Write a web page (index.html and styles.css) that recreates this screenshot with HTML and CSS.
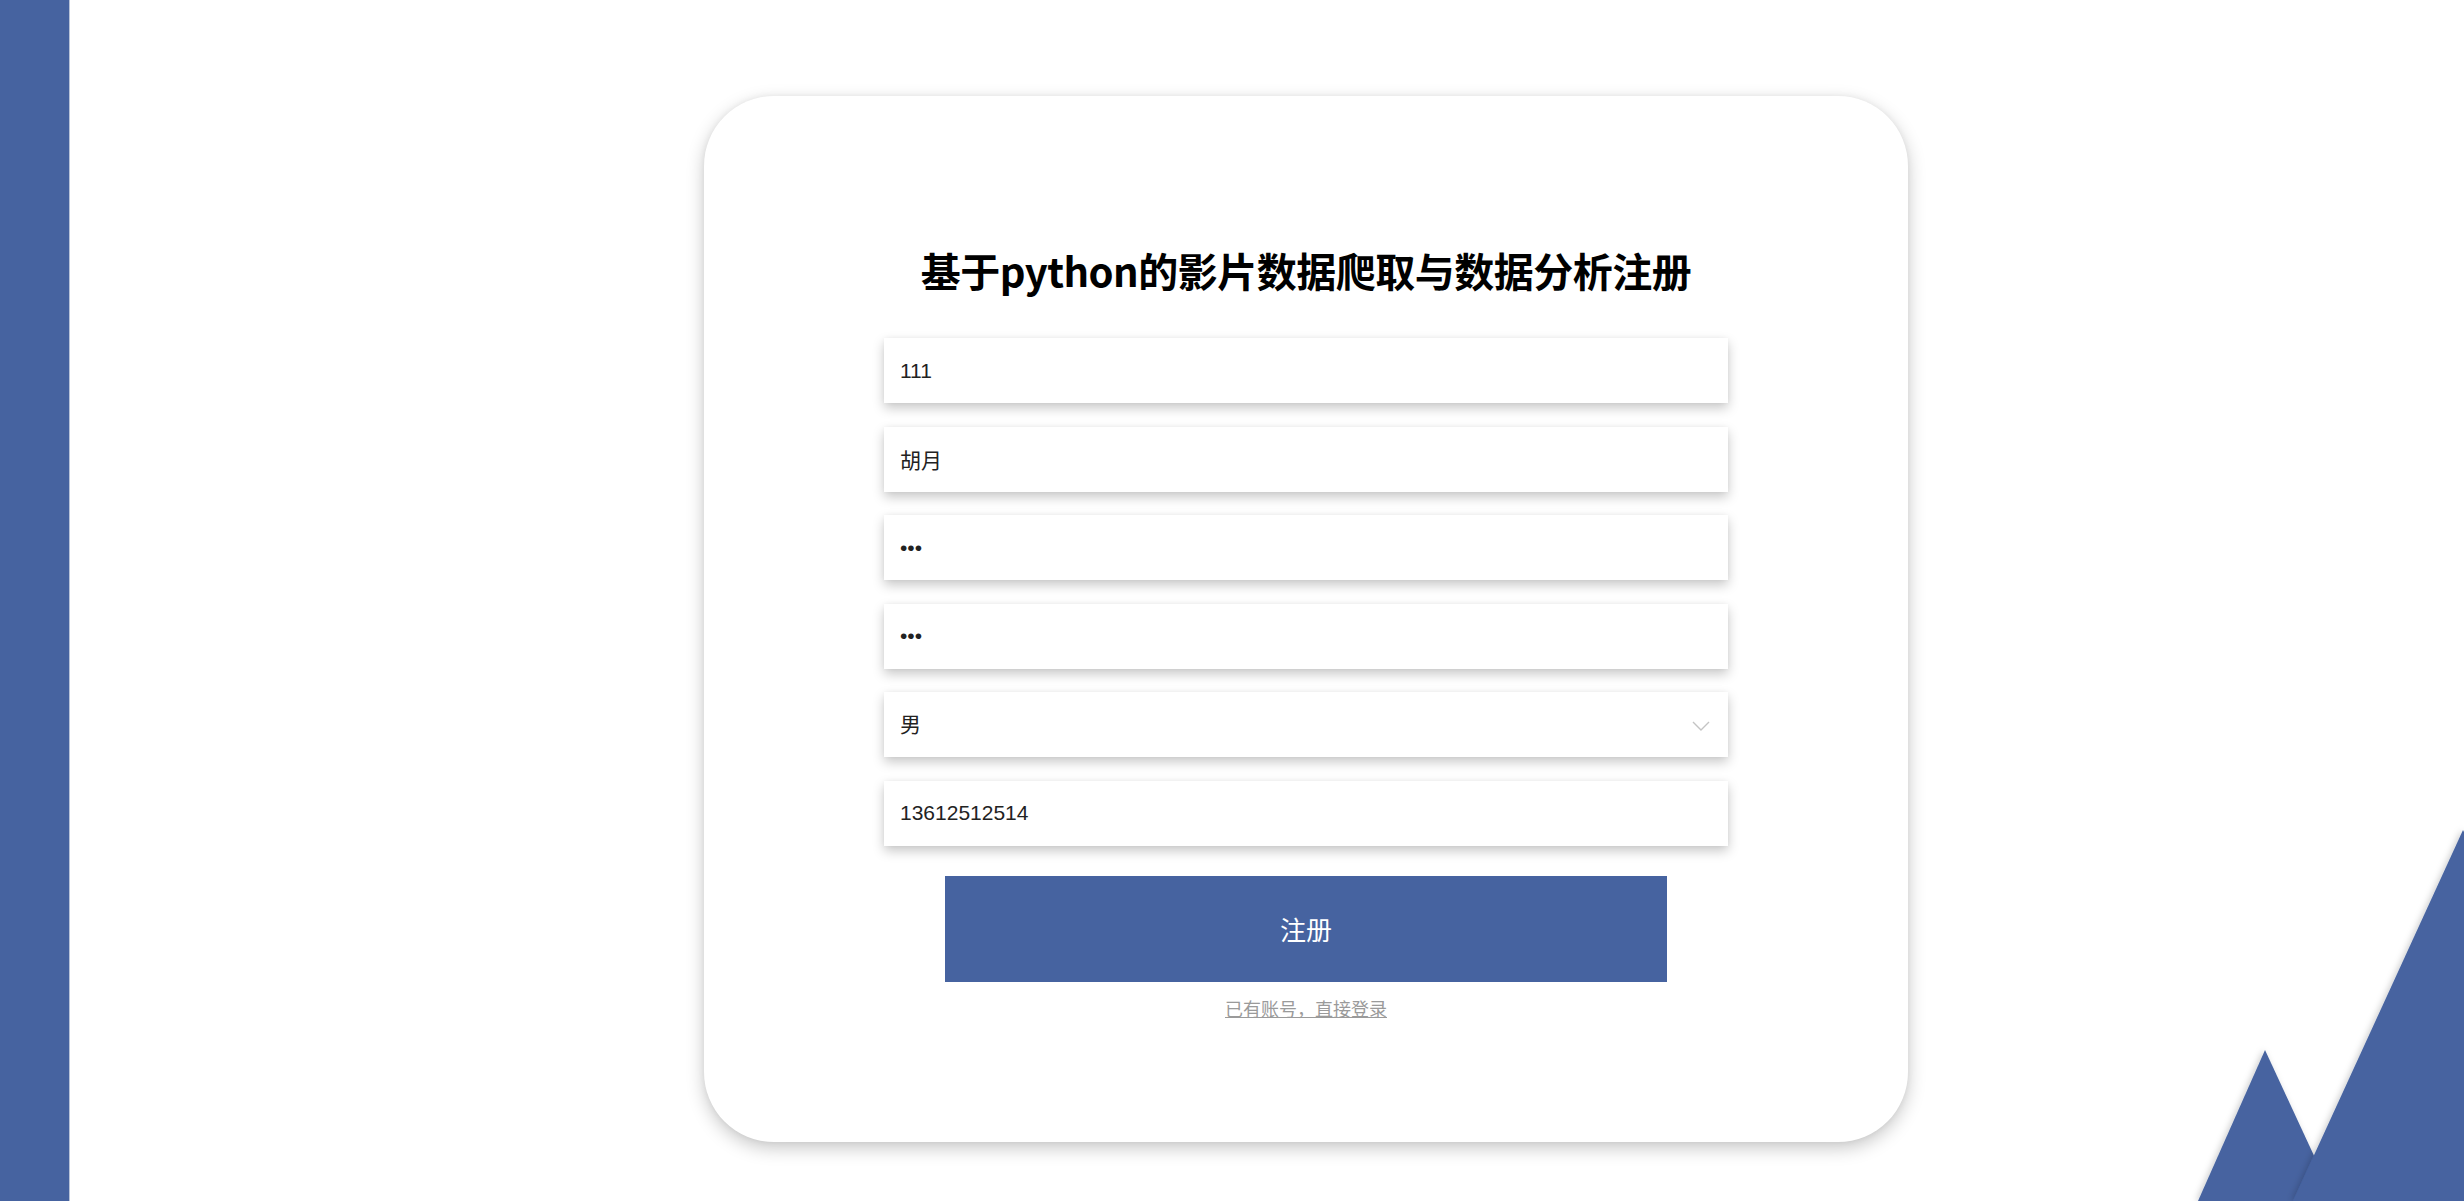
FILE: index.html
```html
<!DOCTYPE html>
<html lang="zh-CN">
<head>
<meta charset="utf-8">
<title>注册</title>
<link rel="stylesheet" href="styles.css">
</head>
<body>
<div class="page">
  <div class="side-bar"></div>
  <main class="main">
    <div class="card">
      <h1 class="title">基于python的影片数据爬取与数据分析注册</h1>
      <form class="form">
        <input class="field" type="text" value="111">
        <input class="field" type="text" value="胡月">
        <input class="field" type="password" value="111">
        <input class="field" type="password" value="111">
        <div class="select-wrap">
          <select class="field select">
            <option>男</option>
            <option>女</option>
          </select>
          <svg class="chevron" width="18" height="10" viewBox="0 0 18 10"><path d="M1 1 L9 9 L17 1" fill="none" stroke="#c4c4c4" stroke-width="1.4"/></svg>
        </div>
        <input class="field" type="text" value="13612512514">
        <button class="submit" type="button">注册</button>
        <a class="login-link" href="#">已有账号，直接登录</a>
      </form>
    </div>
  </main>
  <svg class="mountains" width="280" height="380" viewBox="0 0 280 380">
    <defs>
      <filter id="sh" x="-20%" y="-20%" width="140%" height="140%">
        <feDropShadow dx="-2" dy="0" stdDeviation="3" flood-color="#000" flood-opacity="0.18"/>
      </filter>
    </defs>
    <polygon points="81,229 14,380 151,380" fill="#4663a0" filter="url(#sh)"/>
    <polygon points="279,9 109,380 460,380" fill="#4663a0" filter="url(#sh)"/>
  </svg>
</div>
</body>
</html>
```

FILE: styles.css
```css
html, body {
  margin: 0;
  padding: 0;
  background: #ffffff;
  height: 100%;
  overflow: hidden;
}

.page {
  display: flex;
  min-height: 100vh;
  position: relative;
}

.side-bar {
  width: 70px;
  flex: 0 0 70px;
  background: #4663a0;
  border-right: 1px solid #b9c3d8;
  box-sizing: border-box;
}

.main {
  flex: 1;
  padding-top: 96px;
  padding-left: 634px;
}

.card {
  width: 1204px;
  height: 1046px;
  box-sizing: border-box;
  background: #ffffff;
  border-radius: 70px;
  box-shadow: 0 6px 18px rgba(0, 0, 0, 0.22), 0 0 6px rgba(0, 0, 0, 0.05);
  padding-top: 150px;
  display: flex;
  flex-direction: column;
  align-items: center;
}

.title {
  margin: 0;
  font-family: "Noto Sans CJK SC", "Liberation Sans", sans-serif;
  font-weight: 700;
  font-size: 40px;
  line-height: 48px;
  color: #000000;
  letter-spacing: -0.5px;
}

.form {
  margin-top: 44px;
  width: 844px;
  display: flex;
  flex-direction: column;
  align-items: center;
  gap: 23.6px;
}

.field {
  width: 844px;
  height: 65px;
  box-sizing: border-box;
  border: none;
  outline: none;
  background: #ffffff;
  padding: 0 16px;
  font-family: "Liberation Sans", "Noto Sans CJK SC", sans-serif;
  font-size: 21px;
  color: #222222;
  box-shadow: 0 5px 11px rgba(0, 0, 0, 0.22), 0 0 4px rgba(0, 0, 0, 0.04);
  border-radius: 0;
}

.select-wrap {
  position: relative;
  width: 844px;
  height: 65px;
}

.select {
  appearance: none;
  -webkit-appearance: none;
  display: block;
}

.chevron {
  position: absolute;
  right: 18px;
  top: 29px;
}

.submit {
  margin-top: 6px;
  width: 722px;
  height: 106px;
  border: none;
  background: #4663a0;
  color: #ffffff;
  font-family: "Noto Sans CJK SC", sans-serif;
  font-size: 26px;
  cursor: pointer;
}

.login-link {
  margin-top: -9px;
  font-family: "Noto Sans CJK SC", sans-serif;
  font-size: 18px;
  line-height: 24px;
  color: #9a9a9a;
  text-decoration: underline;
}

.mountains {
  position: absolute;
  right: 0;
  bottom: 0;
  width: 280px;
  height: 380px;
  overflow: visible;
}
```
